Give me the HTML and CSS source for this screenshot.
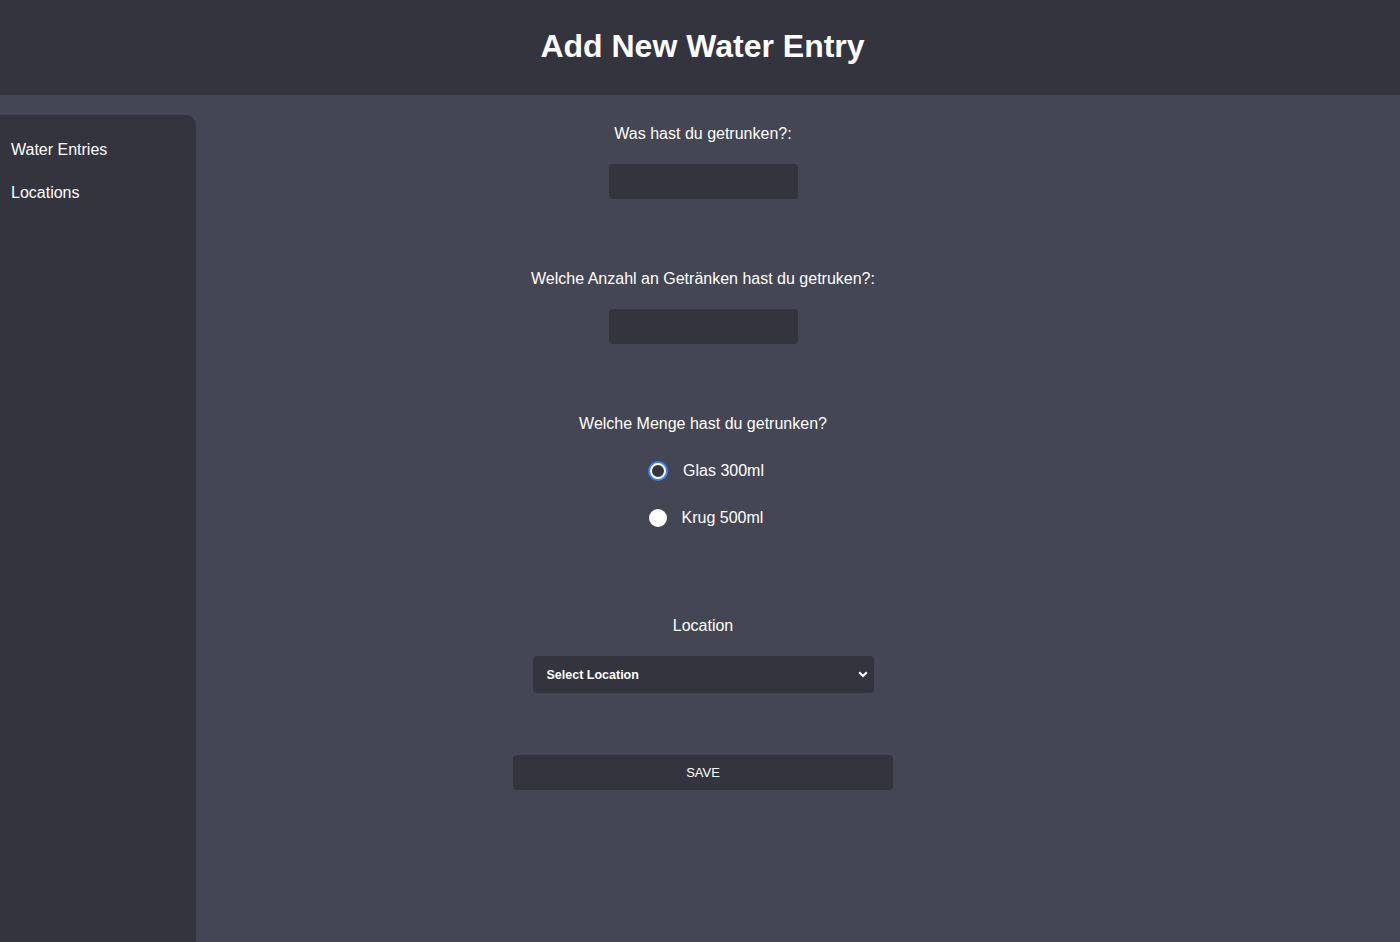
FILE: index.html
```html
<!DOCTYPE html>
<html lang="de">
<head>
<meta charset="utf-8">
<title>Add New Water Entry</title>
<link rel="stylesheet" href="styles.css">
</head>
<body>
<header class="topbar">
  <h1 class="title">Add New Water Entry</h1>
</header>
<div class="layout">
  <nav class="sidebar">
    <a class="nav-link" href="#">Water Entries</a>
    <a class="nav-link" href="#">Locations</a>
  </nav>
  <main class="content">
    <form class="entry-form">
      <div class="group">
        <label class="label" for="drink">Was hast du getrunken?:</label>
        <input class="field" id="drink" type="text">
      </div>
      <div class="group">
        <label class="label" for="count">Welche Anzahl an Getränken hast du getruken?:</label>
        <input class="field" id="count" type="text">
      </div>
      <div class="group group-radio">
        <div class="label">Welche Menge hast du getrunken?</div>
        <label class="radio-row">
          <span class="radio radio-focus"></span>
          <span class="radio-text">Glas 300ml</span>
        </label>
        <label class="radio-row">
          <span class="radio"></span>
          <span class="radio-text">Krug 500ml</span>
        </label>
      </div>
      <div class="group group-select">
        <label class="label" for="loc">Location</label>
        <div class="select-wrap">
          <select class="select" id="loc">
            <option>Select Location</option>
          </select>
          <svg class="chevron" width="10" height="7" viewBox="0 0 10 7"><path d="M1.2 1.2 L5 5 L8.8 1.2" fill="none" stroke="#ffffff" stroke-width="2"/></svg>
        </div>
      </div>
      <button class="save" type="button">SAVE</button>
    </form>
  </main>
</div>
</body>
</html>
```

FILE: styles.css
```css
html, body {
  margin: 0;
  padding: 0;
}
body {
  background: #444654;
  font-family: "Liberation Sans", Arial, sans-serif;
  color: #ffffff;
  height: 942px;
  overflow: hidden;
}
.topbar {
  height: 95px;
  background: #34343f;
  display: flex;
  align-items: center;
  justify-content: center;
  padding-left: 5px;
  box-sizing: border-box;
}
.title {
  margin: 0;
  font-size: 32px;
  font-weight: bold;
  line-height: 37px;
  padding-bottom: 3px;
}
.layout {
  display: grid;
  grid-template-columns: 196px 1fr 190px;
  height: 847px;
}
.sidebar {
  margin-top: 20px;
  background: #34343f;
  border-top-right-radius: 10px;
  display: flex;
  flex-direction: column;
  padding: 26px 0 0 11px;
  gap: 25px;
}
.nav-link {
  color: #ffffff;
  text-decoration: none;
  font-size: 16px;
  line-height: 18px;
}
.content {
  padding-top: 30px;
}
.entry-form {
  display: flex;
  flex-direction: column;
  align-items: center;
}
.group {
  display: flex;
  flex-direction: column;
  align-items: center;
  margin-bottom: 71px;
}
.label {
  font-size: 16px;
  line-height: 18px;
  margin-bottom: 21px;
}
.field {
  width: 189px;
  height: 35px;
  box-sizing: border-box;
  background: #34343f;
  border: none;
  border-radius: 4px;
  color: #ffffff;
}
.group-radio {
  margin-bottom: 76px;
}
.group-radio .label {
  margin-bottom: 14px;
}
.radio-row {
  height: 47px;
  display: flex;
  align-items: center;
  gap: 15px;
  font-size: 16px;
  padding-left: 6px;
}
.radio {
  width: 18px;
  height: 18px;
  border-radius: 50%;
  background: #ffffff;
  box-sizing: border-box;
}
.radio-focus {
  background: #34343f;
  border: 2px solid #ffffff;
  box-shadow: 0 0 0 2px #3b82f6;
  width: 16px;
  height: 16px;
  margin-left: 2px;
  margin-right: 2px;
}
.radio-text {
  line-height: 18px;
}
.group-select {
  margin-bottom: 62px;
}
.select-wrap {
  position: relative;
  width: 341px;
  height: 37px;
}
.select {
  appearance: none;
  -webkit-appearance: none;
  width: 100%;
  height: 100%;
  background: #34343f;
  border: none;
  border-radius: 4px;
  color: #ffffff;
  font-family: "Liberation Sans", Arial, sans-serif;
  font-size: 12.5px;
  font-weight: bold;
  padding: 0 14px;
  outline: none;
}
.chevron {
  position: absolute;
  right: 6px;
  top: 15px;
  pointer-events: none;
}
.save {
  width: 380px;
  height: 35px;
  background: #34343f;
  border: none;
  border-radius: 4px;
  color: #ffffff;
  font-family: "Liberation Sans", Arial, sans-serif;
  font-size: 13px;
  padding: 0;
}
```
